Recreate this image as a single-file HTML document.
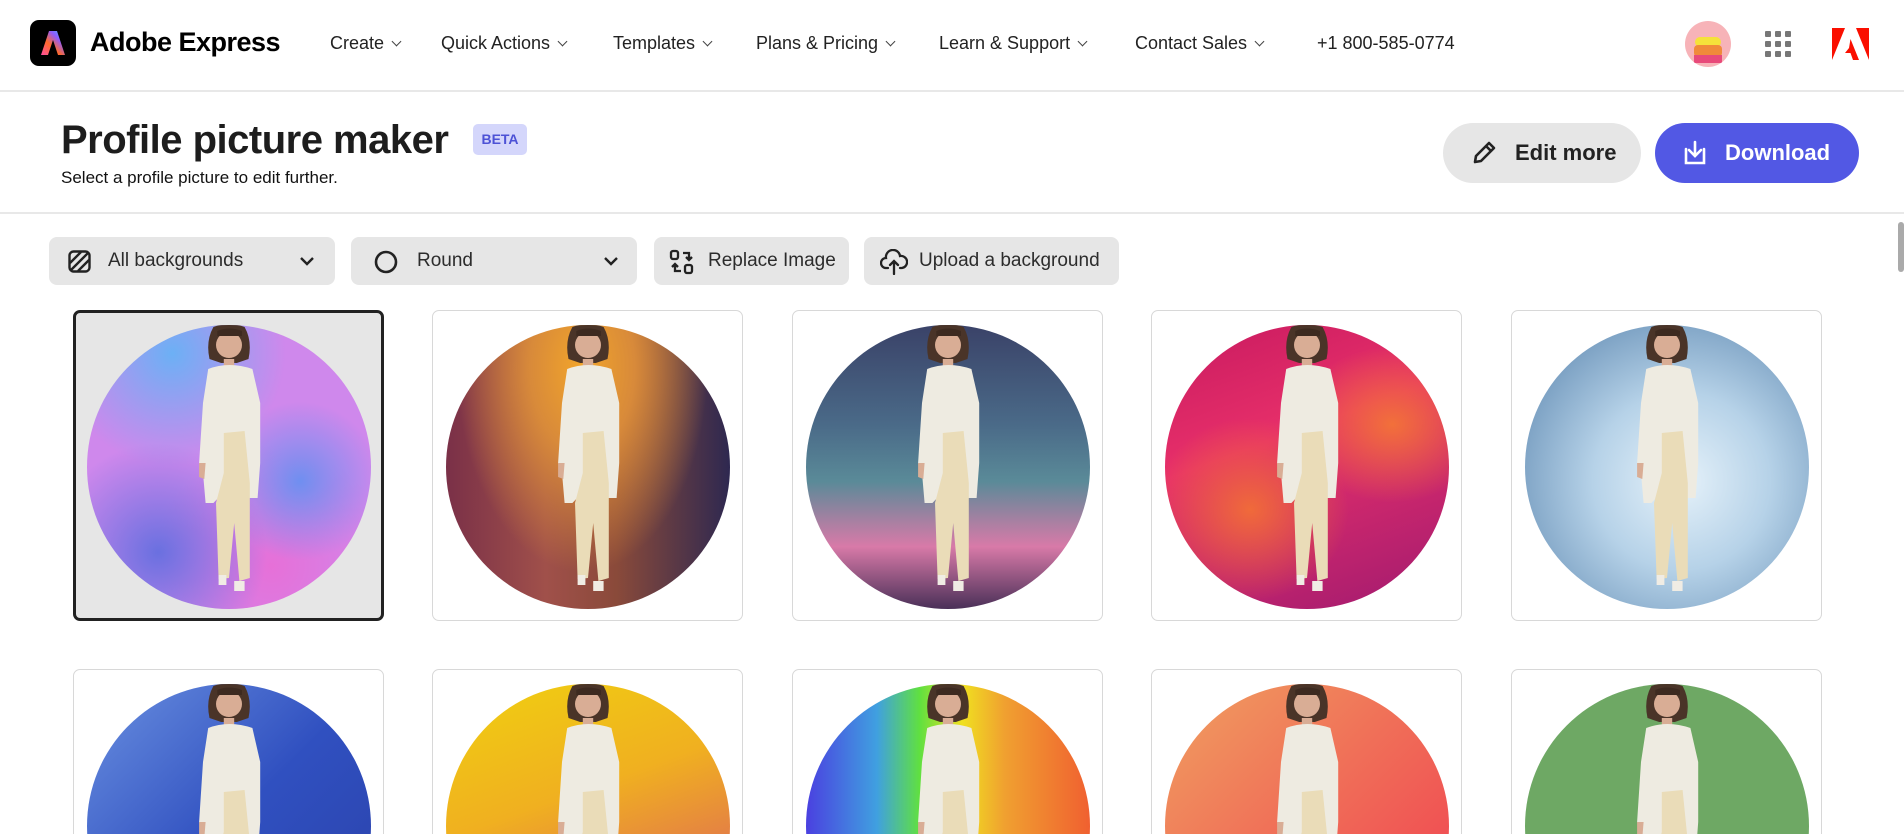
<!DOCTYPE html>
<html><head><meta charset="utf-8"><style>
*{box-sizing:border-box;margin:0;padding:0}
html{width:1904px;height:834px;overflow:hidden}
body{width:1904px;height:834px;overflow:hidden;background:#fff;font-family:"Liberation Sans",sans-serif;color:#2c2c2c;position:relative}
.hdr{position:absolute;left:0;top:0;width:1904px;height:92px;border-bottom:2px solid #e8e8e8}
.logo{position:absolute;left:30px;top:20px;width:46px;height:46px;background:#000;border-radius:9px}
.brand{position:absolute;left:90px;top:27px;font-size:27px;font-weight:bold;color:#000;letter-spacing:-0.5px}
.nav{position:absolute;top:33px;font-size:18px;color:#222}
.nav .c{display:inline-block;width:7px;height:7px;border-right:1.3px solid #444;border-bottom:1.3px solid #444;transform:rotate(45deg);margin-left:9px;position:relative;top:-4px}
.title{position:absolute;left:61px;top:118px;font-size:40px;font-weight:bold;color:#1d1d1d;letter-spacing:-0.5px}
.beta{position:absolute;left:473px;top:124px;width:54px;height:31px;background:#d4d6fb;border-radius:5px;color:#4d52d6;font-size:14px;font-weight:bold;text-align:center;line-height:31px}
.sub{position:absolute;left:61px;top:168px;font-size:17px;color:#111}
.btn{position:absolute;top:123px;height:60px;border-radius:30px;font-size:22px;font-weight:bold;line-height:60px}
.line2{position:absolute;left:0;top:212px;width:1904px;height:2px;background:#e8e8e8}
.tb{position:absolute;top:237px;height:48px;background:#e6e6e6;border-radius:8px;font-size:19px;line-height:48px;color:#2c2c2c}
.card{position:absolute;width:311px;height:311px;border:1.5px solid #d8d8d8;border-radius:7px;background:#fff;overflow:hidden}
.card.sel{background:#e6e6e6;border:3px solid #222}
.circ{position:absolute;left:50%;top:14px;width:284px;height:284px;margin-left:-142px;border-radius:50%;overflow:hidden}
.fig{position:absolute;left:50%;top:-2px;margin-left:-52px;width:104px;height:290px}
</style></head><body>
<svg width="0" height="0" style="position:absolute"><defs>
<symbol id="p" viewBox="0 0 80 290" preserveAspectRatio="none">
<path d="M28 4 Q40 -2 52 4 Q58 18 55 36 L46 40 L34 40 L25 36 Q22 18 28 4Z" fill="#4a3428"/>
<ellipse cx="40" cy="22" rx="10" ry="13" fill="#d9ad95"/>
<path d="M31 8 Q40 3 50 8 L50 13 L31 13Z" fill="#3d2a20"/>
<path d="M36 36 L44 36 L44 45 L36 45Z" fill="#d9ad95"/>
<path d="M24 46 Q40 38 58 46 L64 80 L64 140 L62 175 L50 175 L50 150 L28 180 L22 180 L20 150 L17 140 L20 80Z" fill="#eeebe1"/>
<path d="M17 140 L22 140 L21 156 L17 154Z" fill="#d9ad95"/>
<path d="M36 110 L52 108 L56 160 L56 255 L48 258 L44 200 L40 255 L32 256 L30 180 L36 150Z" fill="#eadcb8"/>
<path d="M44 258 L52 258 L52 268 L44 268Z" fill="#f0ece4"/>
<path d="M32 252 L38 252 L38 262 L32 262Z" fill="#f0ece4"/>
</symbol>
</defs></svg>

<div class="hdr">
<div class="logo"><svg width="46" height="46" viewBox="0 0 46 46"><defs><linearGradient id="lg" x1="0" y1="1" x2="1" y2="0"><stop offset="0" stop-color="#ff4fa0"/><stop offset=".4" stop-color="#ff6a2b"/><stop offset=".7" stop-color="#8f5cff"/><stop offset="1" stop-color="#37c5ff"/></linearGradient></defs><path d="M19 11 L27 11 L35 35 L28 35 L23 20 L18 35 L11 35Z" fill="url(#lg)"/></svg></div>
<div class="brand">Adobe Express</div>
<div class="nav" style="left:330px">Create<span class="c"></span></div>
<div class="nav" style="left:441px">Quick Actions<span class="c"></span></div>
<div class="nav" style="left:613px">Templates<span class="c"></span></div>
<div class="nav" style="left:756px">Plans &amp; Pricing<span class="c"></span></div>
<div class="nav" style="left:939px">Learn &amp; Support<span class="c"></span></div>
<div class="nav" style="left:1135px">Contact Sales<span class="c"></span></div>
<div class="nav" style="left:1317px">+1 800-585-0774</div>
<div style="position:absolute;left:1685px;top:21px;width:46px;height:46px;border-radius:50%;background:#f7b3b8;overflow:hidden"><div style="position:absolute;left:10px;top:16px;width:26px;height:10px;background:#f5e23a;border-radius:5px"></div><div style="position:absolute;left:9px;top:24px;width:28px;height:12px;background:#f08a3a;border-radius:4px"></div><div style="position:absolute;left:9px;top:34px;width:28px;height:8px;background:#e84a7a"></div></div>
<svg style="position:absolute;left:1765px;top:31px" width="26" height="26" viewBox="0 0 26 26" fill="#777"><rect x="0" y="0" width="6" height="6" rx="1"/><rect x="10" y="0" width="6" height="6" rx="1"/><rect x="20" y="0" width="6" height="6" rx="1"/><rect x="0" y="10" width="6" height="6" rx="1"/><rect x="10" y="10" width="6" height="6" rx="1"/><rect x="20" y="10" width="6" height="6" rx="1"/><rect x="0" y="20" width="6" height="6" rx="1"/><rect x="10" y="20" width="6" height="6" rx="1"/><rect x="20" y="20" width="6" height="6" rx="1"/></svg>
<svg style="position:absolute;left:1832px;top:28px" width="37" height="32" viewBox="0 0 37 32" fill="#fa0f00"><path d="M0 0 L13 0 L0 32Z"/><path d="M24 0 L37 0 L37 32Z"/><path d="M18.5 11 L27 32 L21 32 L18.5 25 L13 25 L17 20Z"/></svg>
</div>

<div class="title">Profile picture maker</div>
<div class="beta">BETA</div>
<div class="sub">Select a profile picture to edit further.</div>

<div class="btn" style="left:1443px;width:198px;background:#e6e6e6;color:#222">
<svg style="position:absolute;left:28px;top:17px" width="26" height="26" viewBox="0 0 26 26" fill="none" stroke="#222" stroke-width="2.6" stroke-linejoin="round"><path d="M4 22 L5 16 L18 3 L23 8 L10 21Z M15 6 L20 11"/></svg>
<span style="position:absolute;left:72px">Edit more</span></div>
<div class="btn" style="left:1655px;width:204px;background:#5258e4;color:#fff">
<svg style="position:absolute;left:26px;top:16px" width="28" height="28" viewBox="0 0 28 28" fill="none" stroke="#fff" stroke-width="2.6" stroke-linecap="round"><path d="M14 3 V17 M8 11 L14 17 L20 11 M5 10 V24 H23 V10"/></svg>
<span style="position:absolute;left:70px">Download</span></div>

<div class="line2"></div>

<div class="tb" style="left:49px;width:286px">
<svg style="position:absolute;left:19px;top:13px" width="23" height="23" viewBox="0 0 23 23" fill="none" stroke="#222" stroke-width="2.4"><rect x="1.5" y="1.5" width="20" height="20" rx="4"/><path d="M2 13 L13 2 M3 20 L20 3 M10 21 L21 10"/></svg>
<span style="position:absolute;left:59px">All backgrounds</span>
<svg style="position:absolute;left:251px;top:19px" width="14" height="10" viewBox="0 0 14 10" fill="none" stroke="#222" stroke-width="2.4"><path d="M1 2 L7 8 L13 2"/></svg></div>
<div class="tb" style="left:351px;width:286px">
<svg style="position:absolute;left:23px;top:13px" width="24" height="24" viewBox="0 0 24 24" fill="none" stroke="#222" stroke-width="2.6"><circle cx="12" cy="12" r="10"/></svg>
<span style="position:absolute;left:66px">Round</span>
<svg style="position:absolute;left:253px;top:19px" width="14" height="10" viewBox="0 0 14 10" fill="none" stroke="#222" stroke-width="2.4"><path d="M1 2 L7 8 L13 2"/></svg></div>
<div class="tb" style="left:654px;width:195px">
<svg style="position:absolute;left:15px;top:12px" width="26" height="26" viewBox="0 0 26 26" fill="none" stroke="#222" stroke-width="2.3"><rect x="2" y="2" width="7" height="8" rx="2"/><rect x="16" y="16" width="7" height="8" rx="2"/><path d="M14 4 H20 V11 M17 8 L20 11 L23 8 M12 22 H6 V15 M3 18 L6 15 L9 18"/></svg>
<span style="position:absolute;left:54px">Replace Image</span></div>
<div class="tb" style="left:864px;width:255px">
<svg style="position:absolute;left:16px;top:12px" width="28" height="26" viewBox="0 0 28 26" fill="none" stroke="#222" stroke-width="2.3" stroke-linecap="round"><path d="M8 19 H6 A5 5 0 0 1 6 9 A7 7 0 0 1 20 7 A5 5 0 0 1 22 19 H20 M14 12 V25 M10 16 L14 12 L18 16"/></svg>
<span style="position:absolute;left:55px">Upload a background</span></div>

<div style="position:absolute;left:1898px;top:222px;width:6px;height:50px;border-radius:3px;background:#aaa"></div>

<div class="card sel" style="left:73px;top:310px"><div class="circ" style="top:12px;background:radial-gradient(circle at 75% 55%,#6f8ff0 0,transparent 30%),radial-gradient(circle at 25% 80%,#6a70e0 0,transparent 35%),radial-gradient(circle at 65% 85%,#e670d8 0,transparent 40%),radial-gradient(circle at 30% 10%,#6cb0f5 0,transparent 35%),#cf88ec"><svg class="fig"><use href="#p"/></svg></div></div>
<div class="card" style="left:432px;top:310px"><div class="circ" style="background:radial-gradient(ellipse at 48% 15%,#f2a52a 0,#d88a3a 25%,transparent 60%),linear-gradient(90deg,#7a3048 0,#a0504a 35%,#8a4a3a 60%,#2e2850 100%)"><svg class="fig"><use href="#p"/></svg></div></div>
<div class="card" style="left:792px;top:310px"><div class="circ" style="background:linear-gradient(180deg,#3a4268 0,#4a6a88 35%,#5a8a98 55%,#d87aa8 78%,#4a3058 100%)"><svg class="fig"><use href="#p"/></svg></div></div>
<div class="card" style="left:1151px;top:310px"><div class="circ" style="background:radial-gradient(ellipse at 30% 65%,#f06a3a 0,transparent 35%),radial-gradient(ellipse at 80% 35%,#f2703a 0,transparent 30%),linear-gradient(160deg,#c81a60 0,#e8306a 40%,#a01a70 100%)"><svg class="fig"><use href="#p"/></svg></div></div>
<div class="card" style="left:1511px;top:310px"><div class="circ" style="background:radial-gradient(circle at 55% 55%,#e6f2fa 0,#b6d2e8 40%,#6a92b8 85%,#5a80a8 100%)"><svg class="fig"><use href="#p"/></svg></div></div>

<div class="card" style="left:73px;top:669px"><div class="circ" style="background:linear-gradient(135deg,#6a90e0 0,#3050c0 50%,#2a40a8 100%)"><svg class="fig"><use href="#p"/></svg></div></div>
<div class="card" style="left:432px;top:669px"><div class="circ" style="background:linear-gradient(160deg,#f0d010 0,#f0b020 40%,#e07050 75%,#c04070 100%)"><svg class="fig"><use href="#p"/></svg></div></div>
<div class="card" style="left:792px;top:669px"><div class="circ" style="background:linear-gradient(90deg,#4a40e0 0,#40a0e0 25%,#60e040 40%,#f0e020 55%,#f0a030 70%,#f06030 100%)"><svg class="fig"><use href="#p"/></svg></div></div>
<div class="card" style="left:1151px;top:669px"><div class="circ" style="background:linear-gradient(135deg,#f0a060 0,#f07058 45%,#f03a50 100%)"><svg class="fig"><use href="#p"/></svg></div></div>
<div class="card" style="left:1511px;top:669px"><div class="circ" style="background:#6ea864"><svg class="fig"><use href="#p"/></svg></div></div>
</body></html>
